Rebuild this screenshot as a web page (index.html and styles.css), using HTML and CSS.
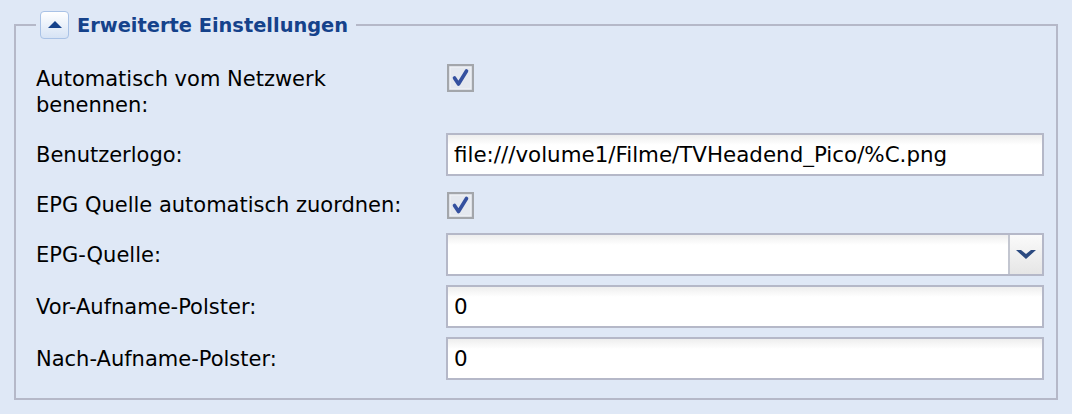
FILE: index.html
```html
<!DOCTYPE html>
<html lang="de">
<head>
    <meta charset="UTF-8">
    <meta name="viewport" content="width=device-width, initial-scale=1.0">
    <title>Erweiterte Einstellungen</title>
    <link rel="stylesheet" href="styles.css">
</head>
<body>
    <fieldset class="panel">
        <legend class="panel-legend">
            <span class="toggle">
                <svg width="14" height="7" viewBox="0 0 14 7"><path d="M7 0 L14 7 L0 7 Z" fill="#15428b"/></svg>
            </span>
            <span class="legend-title">Erweiterte Einstellungen</span>
        </legend>

        <div class="form-row row-first">
            <label class="field-label">Automatisch vom Netzwerk<br>benennen:</label>
            <span class="check">
                <svg width="27" height="28" viewBox="0 0 27 28">
                    <rect x="1" y="1" width="25" height="26" fill="#c9cdd4" stroke="#a3a6ab" stroke-width="2"/>
                    <rect x="3" y="3" width="21" height="22" fill="#e4e8ef" stroke="#f2f4f7" stroke-width="1"/>
                    <path d="M7.5 14 L11.5 20 L19.5 7" fill="none" stroke="#34509f" stroke-width="3.6" stroke-linecap="round" stroke-linejoin="round"/>
                </svg>
            </span>
        </div>

        <div class="form-row">
            <label class="field-label">Benutzerlogo:</label>
            <input class="text-field" type="text" value="file:///volume1/Filme/TVHeadend_Pico/%C.png">
        </div>

        <div class="form-row row-check">
            <label class="field-label">EPG Quelle automatisch zuordnen:</label>
            <span class="check">
                <svg width="27" height="27" viewBox="0 0 27 27">
                    <rect x="1" y="1" width="25" height="25" fill="#c9cdd4" stroke="#a3a6ab" stroke-width="2"/>
                    <rect x="3" y="3" width="21" height="21" fill="#e4e8ef" stroke="#f2f4f7" stroke-width="1"/>
                    <path d="M7.5 13.5 L11.5 19.5 L19.5 6.5" fill="none" stroke="#34509f" stroke-width="3.6" stroke-linecap="round" stroke-linejoin="round"/>
                </svg>
            </span>
        </div>

        <div class="form-row">
            <label class="field-label">EPG-Quelle:</label>
            <div class="combo">
                <input class="combo-input" type="text" value="">
                <span class="combo-trigger">
                    <svg width="20" height="9" viewBox="0 0 20 9"><path d="M0 0 L5 0 L10 4 L15 0 L20 0 L10 9 Z" fill="#2b4a80"/></svg>
                </span>
            </div>
        </div>

        <div class="form-row">
            <label class="field-label">Vor-Aufname-Polster:</label>
            <input class="text-field" type="text" value="0">
        </div>

        <div class="form-row row-last">
            <label class="field-label">Nach-Aufname-Polster:</label>
            <input class="text-field" type="text" value="0">
        </div>
    </fieldset>
</body>
</html>
```

FILE: styles.css
```css
body {
    margin: 0;
    background-color: #dfe8f6;
    font-family: "DejaVu Sans", Tahoma, sans-serif;
    color: #000;
}
.panel {
    margin: 11px 14px 0 14px;
    padding: 25px 12px 18px 20px;
    border: 2px solid #b5b8c8;
    min-width: 0;
}
.panel-legend {
    display: flex;
    align-items: center;
    gap: 8px;
    padding: 0 8px 0 4px;
    height: 28px;
}
.toggle {
    width: 29px;
    height: 28px;
    box-sizing: border-box;
    border: 1px solid #a9c2e6;
    border-radius: 4px;
    background: linear-gradient(#ffffff, #d6e3f5);
    display: flex;
    align-items: center;
    justify-content: center;
}
.toggle svg {
    margin-top: -1px;
}
.legend-title {
    font-weight: bold;
    font-size: 19.4px;
    color: #15428b;
}
.form-row {
    display: flex;
    align-items: center;
    height: 43px;
    margin-bottom: 9px;
}
.row-first {
    align-items: flex-start;
    height: 54px;
    margin-bottom: 15px;
}
.row-first .field-label {
    padding-top: 2px;
}
.row-check {
    height: 40px;
    margin-bottom: 8px;
}
.row-last {
    margin-bottom: 0;
}
.field-label {
    width: 410px;
    flex-shrink: 0;
    font-size: 21px;
    line-height: 26px;
}
.check {
    display: block;
    height: 28px;
    margin-left: 1px;
}
.row-check .check {
    height: 27px;
}
.text-field, .combo {
    flex: 1;
    height: 43px;
    box-sizing: border-box;
    border: 2px solid #b5b8c8;
    background: linear-gradient(#eeeeee, #ffffff 10px);
}
.text-field {
    padding: 0 6px;
    font-family: "DejaVu Sans", Tahoma, sans-serif;
    font-size: 21.4px;
    color: #000;
    outline: none;
}
.combo {
    display: flex;
}
.combo-input {
    flex: 1;
    min-width: 0;
    border: 0;
    background: transparent;
    padding: 0 6px;
    font-family: "DejaVu Sans", Tahoma, sans-serif;
    font-size: 21px;
    outline: none;
}
.combo-trigger {
    width: 32px;
    border-left: 2px solid #c3c6d0;
    background: linear-gradient(#fafafa, #e6e6e6);
    display: flex;
    align-items: center;
    justify-content: center;
}
```
